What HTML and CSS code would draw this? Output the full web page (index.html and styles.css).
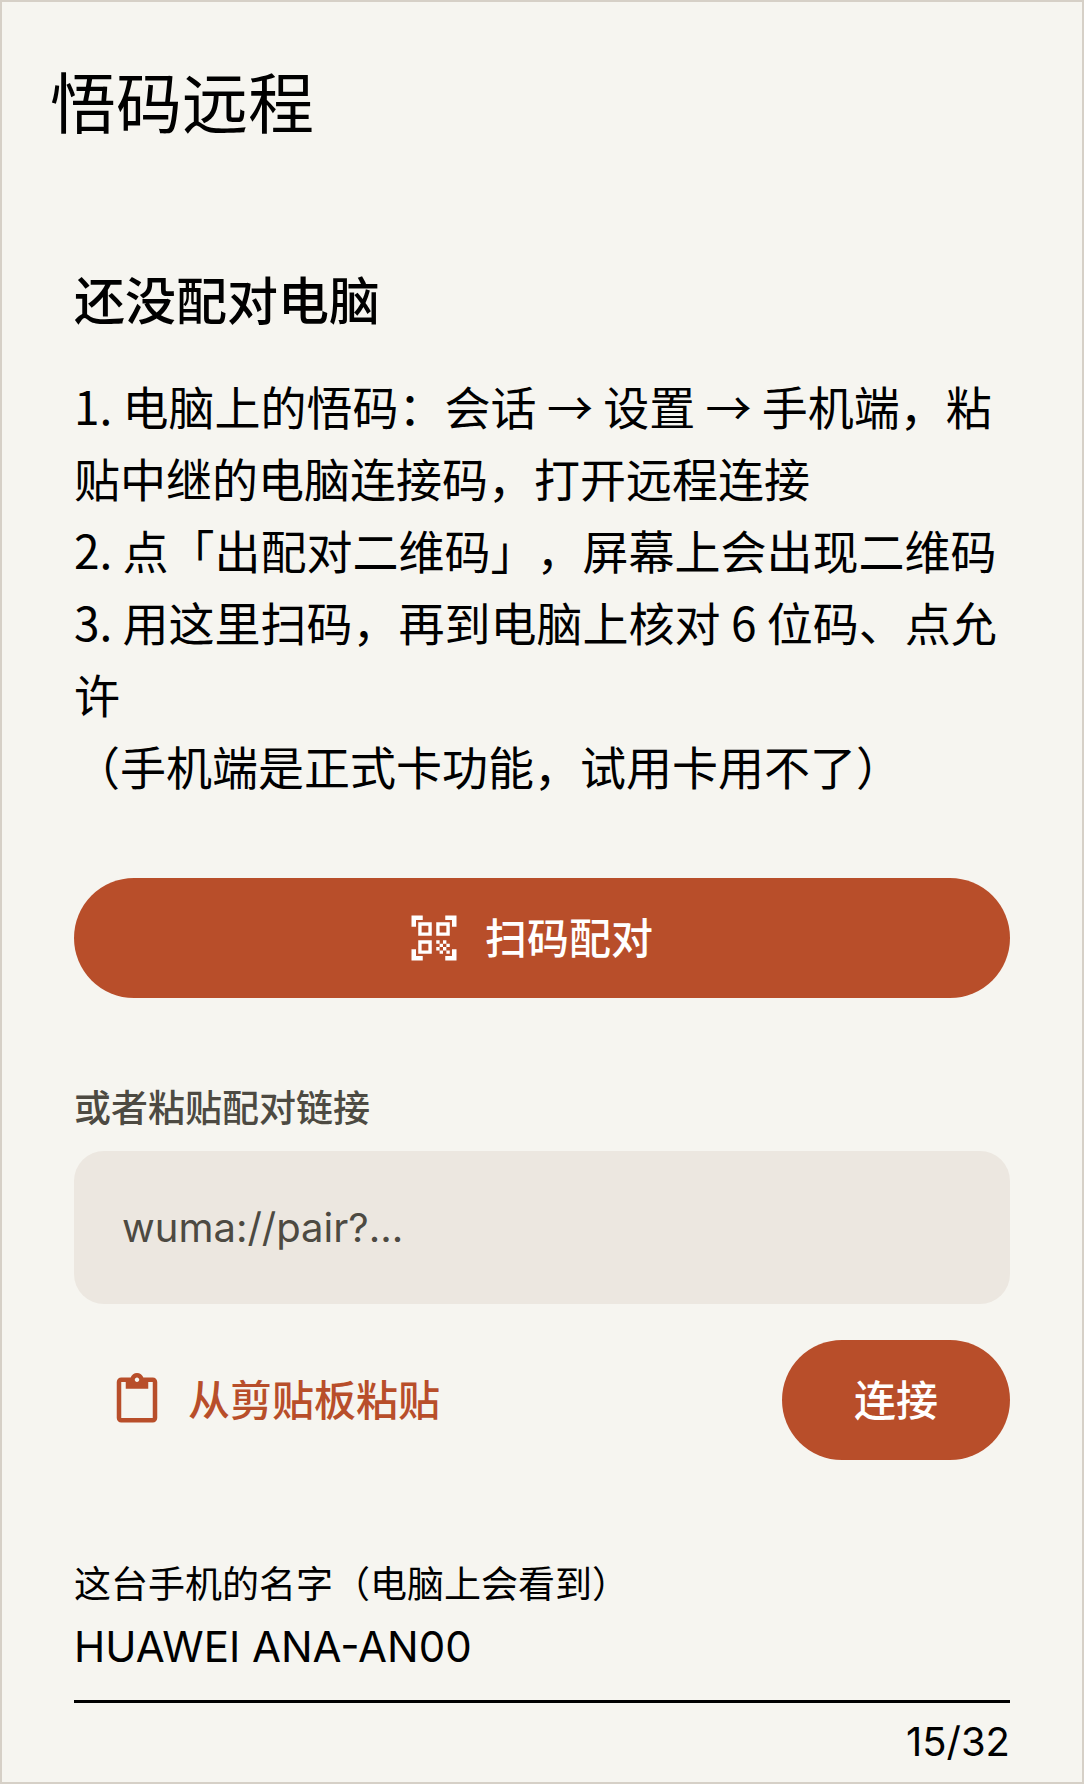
FILE: index.html
```html
<!DOCTYPE html>
<html lang="zh-CN">
<head>
<meta charset="utf-8">
<meta name="viewport" content="width=device-width, initial-scale=1">
<title>悟码远程</title>
<link rel="stylesheet" href="styles.css">
</head>
<body>
<div class="app">
  <header class="app-bar">
    <h1 class="app-title">悟码远程</h1>
  </header>
  <main class="content">
    <section class="intro">
      <h2 class="heading">还没配对电脑</h2>
      <div class="steps">
        <p>1. 电脑上的悟码：会话 → 设置 → 手机端，粘贴中继的电脑连接码，打开远程连接</p>
        <p>2. 点「出配对二维码」，屏幕上会出现二维码</p>
        <p>3. 用这里扫码，再到电脑上核对 6 位码、点允许</p>
        <p>（手机端是正式卡功能，试用卡用不了）</p>
      </div>
    </section>
    <button class="btn btn-filled btn-scan" type="button">
      <svg class="icon" viewBox="0 0 24 24" aria-hidden="true"><path d="M9.5 6.5v3h-3v-3h3M11 5H5v6h6V5zm-1.5 9.5v3h-3v-3h3M11 13H5v6h6v-6zm6.5-6.5v3h-3v-3h3M19 5h-6v6h6V5zm-6 8h1.5v1.5H13V13zm1.5 1.5H16V16h-1.5v-1.5zM16 13h1.5v1.5H16V13zm-3 3h1.5v1.5H13V16zm1.5 1.5H16V19h-1.5v-1.5zM16 16h1.5v1.5H16V16zm1.5-1.5H19V16h-1.5v-1.5zm0 3H19V19h-1.5v-1.5zM22 7h-2V4h-3V2h5v5zm0 15v-5h-2v3h-3v2h5zM2 22h5v-2H4v-3H2v5zM2 2v5h2V4h3V2H2z"/></svg>
      <span class="btn-label">扫码配对</span>
    </button>
    <form class="link-form">
      <label class="label label-muted" for="pair-link">或者粘贴配对链接</label>
      <input class="link-input" id="pair-link" type="text" placeholder="wuma://pair?...">
      <div class="actions">
        <button class="btn btn-text" type="button">
          <svg class="icon" viewBox="0 0 24 24" aria-hidden="true"><path d="M19 2h-4.18C14.4.84 13.3 0 12 0c-1.3 0-2.4.84-2.82 2H5c-1.1 0-2 .9-2 2v16c0 1.1.9 2 2 2h14c1.1 0 2-.9 2-2V4c0-1.1-.9-2-2-2zm-7 0c.55 0 1 .45 1 1s-.45 1-1 1-1-.45-1-1 .45-1 1-1zm7 18H5V4h2v3h10V4h2v16z"/></svg>
          <span class="btn-label">从剪贴板粘贴</span>
        </button>
        <button class="btn btn-filled" type="button"><span class="btn-label">连接</span></button>
      </div>
    </form>
    <div class="name-field">
      <label class="label" for="phone-name">这台手机的名字（电脑上会看到）</label>
      <input class="name-input" id="phone-name" type="text" maxlength="32" value="HUAWEI ANA-AN00">
      <span class="counter">15/32</span>
    </div>
  </main>
</div>
</body>
</html>
```
FILE: styles.css
```css
:root {
  --bg: #f6f5f0;
  --frame: #d6d0c7;
  --ink: #000;
  --muted: #4d4a42;
  --accent: #b84e2a;
  --field: #ece7e0;
  --latin: Inter, "Noto Sans CJK SC", sans-serif;
}

* {
  box-sizing: border-box;
}

body {
  margin: 0;
  background: var(--bg);
  color: var(--ink);
  font-family: "Noto Sans CJK SC", sans-serif;
  text-spacing-trim: space-all;
}

h1, h2, p {
  margin: 0;
}

button, input {
  font-family: inherit;
}

.app {
  min-height: 100vh;
  border: 2px solid var(--frame);
}

.app-bar {
  padding: 57px 48px 63px;
}

.app-title {
  font-size: 66px;
  font-weight: 400;
  line-height: 80px;
}

.content {
  display: flex;
  flex-direction: column;
  padding: 60px 72px 12px;
}

.heading {
  margin-bottom: 35px;
  font-size: 51px;
  font-weight: 500;
  line-height: 72px;
}

.steps {
  font-size: 46px;
  line-height: 72px;
}

.btn {
  display: flex;
  align-items: center;
  justify-content: center;
  gap: 24px;
  height: 120px;
  padding: 0 72px;
  border: 0;
  border-radius: 60px;
  background: none;
  color: var(--accent);
  font-size: 42px;
  font-weight: 500;
}

.btn-filled {
  background: var(--accent);
  color: #fff;
}

.btn-scan {
  margin-top: 77px;
  padding-left: 48px;
}

.btn-text {
  padding: 0 36px;
}

.btn-label {
  padding-bottom: 6px;
}

.icon {
  width: 54px;
  height: 54px;
  fill: currentColor;
}

.link-form {
  display: flex;
  flex-direction: column;
  margin-top: 84px;
}

.label {
  font-size: 37px;
  line-height: 48px;
}

.label-muted {
  color: var(--muted);
  font-weight: 500;
}

.link-input {
  width: 100%;
  height: 153px;
  margin: 21px 0 36px;
  padding: 0 48px;
  border: 0;
  border-radius: 30px;
  background: var(--field);
  font-family: var(--latin);
  font-size: 40px;
}

.link-input::placeholder {
  color: var(--muted);
  opacity: 1;
}

.actions {
  display: flex;
  justify-content: space-between;
}

.name-field {
  display: flex;
  flex-direction: column;
  margin-top: 98px;
}

.name-input {
  width: 100%;
  height: 97px;
  padding: 0 0 14px;
  border: 0;
  border-bottom: 3px solid var(--ink);
  background: none;
  color: var(--ink);
  font-family: var(--latin);
  font-size: 42px;
}

.counter {
  align-self: flex-end;
  margin-top: 15px;
  font-family: var(--latin);
  font-size: 40px;
  line-height: 48px;
}
```
